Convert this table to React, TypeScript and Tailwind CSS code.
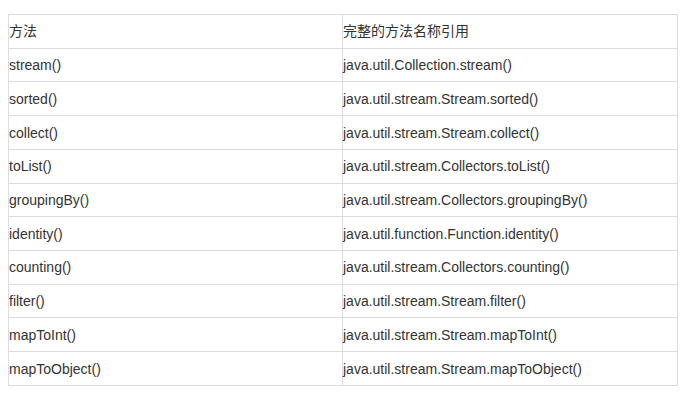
import React from "react";

const rows: [string, string][] = [
  ["方法", "完整的方法名称引用"],
  ["stream()", "java.util.Collection.stream()"],
  ["sorted()", "java.util.stream.Stream.sorted()"],
  ["collect()", "java.util.stream.Stream.collect()"],
  ["toList()", "java.util.stream.Collectors.toList()"],
  ["groupingBy()", "java.util.stream.Collectors.groupingBy()"],
  ["identity()", "java.util.function.Function.identity()"],
  ["counting()", "java.util.stream.Collectors.counting()"],
  ["filter()", "java.util.stream.Stream.filter()"],
  ["mapToInt()", "java.util.stream.Stream.mapToInt()"],
  ["mapToObject()", "java.util.stream.Stream.mapToObject()"],
];

export default function App() {
  return (
    <div
      className="w-[685px] h-[397px] bg-white pt-[14px] pl-[8px]"
      style={{ fontFamily: '"Liberation Sans", Arial, "Noto Sans CJK SC", sans-serif' }}
    >
      <table className="border-collapse w-[670px] text-[14px] text-[#333]">
        <tbody>
          {rows.map(([a, b], i) => (
            <tr key={i} className="h-[33.73px]">
              <td className="border border-[#dddddd] w-[334px] p-0 align-middle leading-none">{a}</td>
              <td className="border border-[#dddddd] p-0 align-middle leading-none">{b}</td>
            </tr>
          ))}
        </tbody>
      </table>
    </div>
  );
}
